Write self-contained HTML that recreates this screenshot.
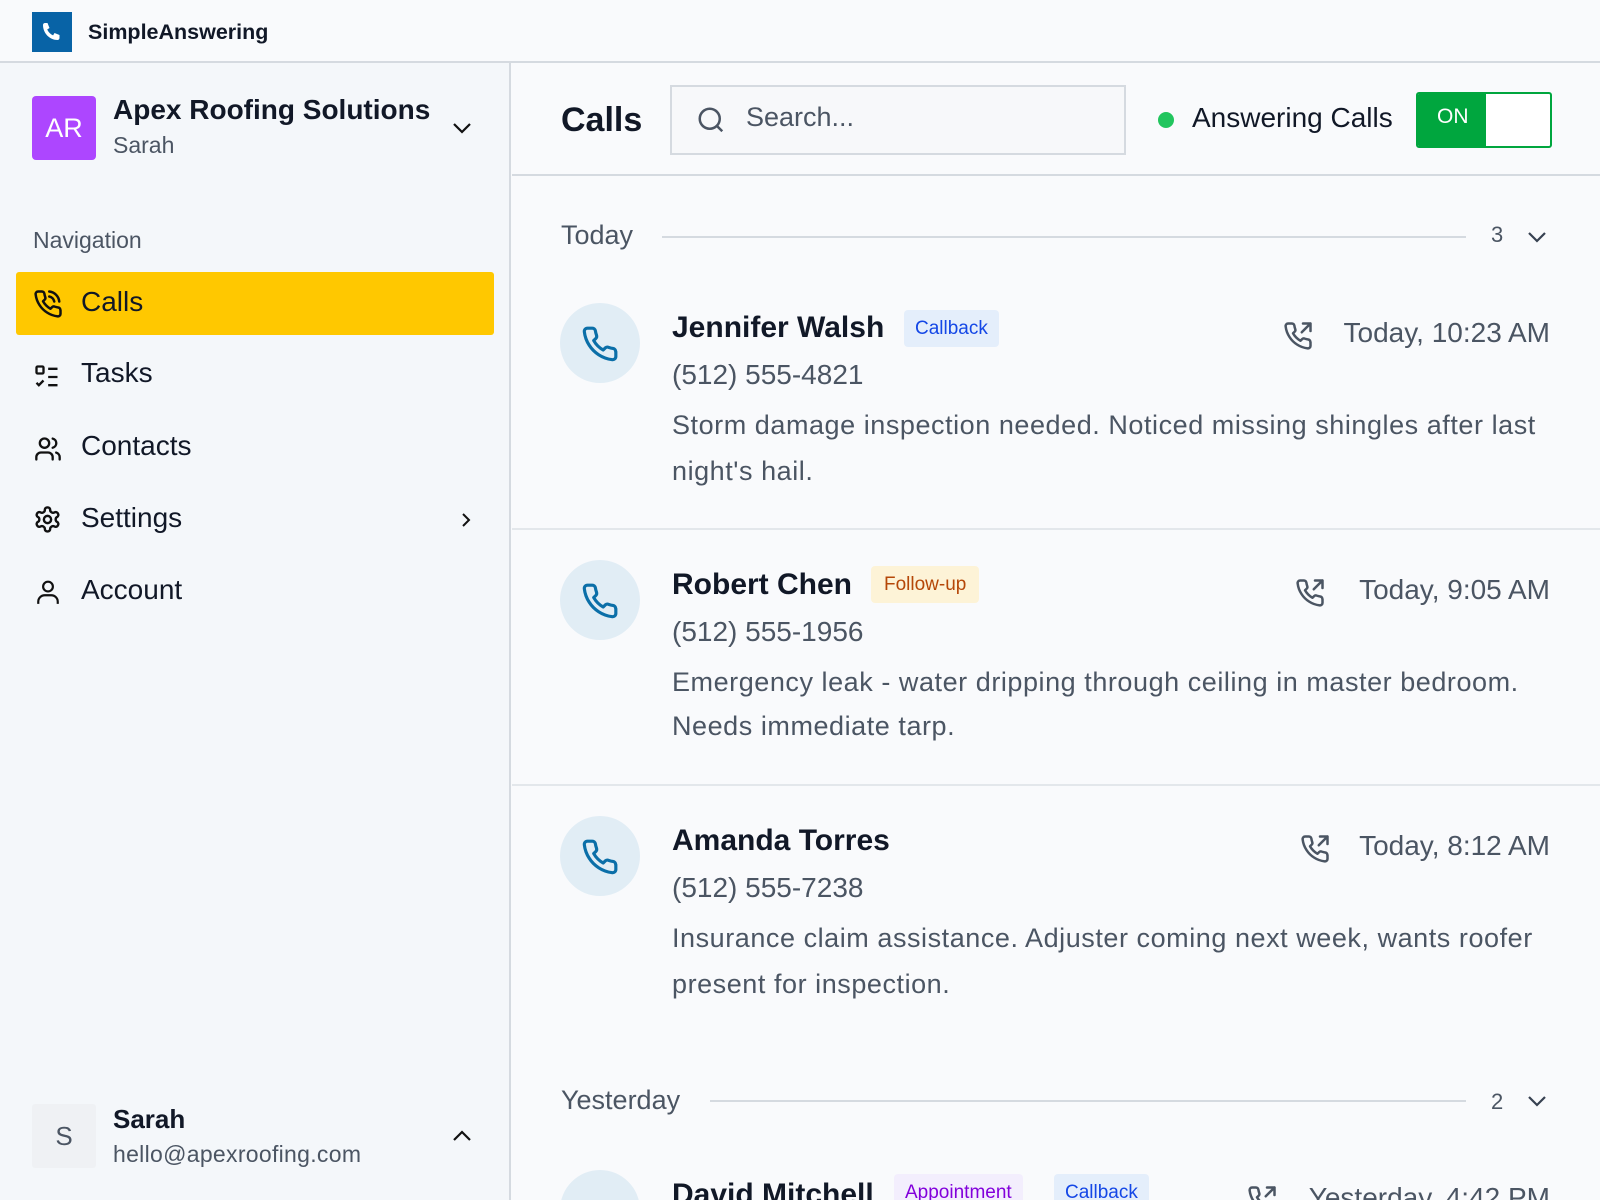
<!DOCTYPE html>
<html><head><meta charset="utf-8"><style>
*{margin:0;padding:0;box-sizing:border-box}
html,body{width:1600px;height:1200px;overflow:hidden}
body{background:#f9fafc;font-family:"Liberation Sans",sans-serif;color:#111827;position:relative}
.t{position:absolute;line-height:1;white-space:nowrap}
.a{position:absolute}
svg{position:absolute;overflow:visible}
.g{color:#4b5563}
.b{font-weight:600}
.d{letter-spacing:0.55px}
.circ{position:absolute;width:80px;height:80px;border-radius:50%;background:#e1edf5}
.badge{position:absolute;height:37px;border-radius:4px;font-size:19px;line-height:37px;padding:0 11px}
</style></head><body>
<!-- header -->
<div class="a" style="left:0;top:0;width:1600px;height:63px;background:#f9fafc;border-bottom:2px solid #d5dae0"></div>
<div class="a" style="left:32px;top:12px;width:40px;height:40px;background:#0863a6"></div>
<svg style="left:40px;top:20px" width="24" height="24" viewBox="0 0 24 24"><path d="M3 5c0-1.2 1-2 2-2h2.5l2 5-2.3 1.5c1.2 2.6 3.3 4.7 5.9 5.9L14.5 13l5 2V18c0 1.1-.8 2-2 2C10 20 3 13.5 3 5z" fill="#fff"/></svg>
<div class="t b" style="left:88px;top:22px;font-size:21.5px">SimpleAnswering</div>
<!-- sidebar -->
<div class="a" style="left:0;top:63px;width:511px;height:1137px;background:#f4f7fa;border-right:2px solid #d5dae0"></div>
<div class="a" style="left:32px;top:96px;width:64px;height:64px;background:#ad46ff;border-radius:4px;color:#fff;font-size:27px;line-height:64px;text-align:center">AR</div>
<div class="t b" style="left:113px;top:96px;font-size:28px">Apex Roofing Solutions</div>
<div class="t g" style="left:113px;top:134px;font-size:23px">Sarah</div>
<svg style="left:452px;top:122px" width="20" height="12"><path d="M2 2l8 8 8-8" fill="none" stroke="#111" stroke-width="2.2"/></svg>
<div class="t g" style="left:33px;top:229px;font-size:23px">Navigation</div>
<div class="a" style="left:16px;top:272px;width:478px;height:63px;background:#ffc800;border-radius:3px"></div>
<svg style="left:33px;top:289px" width="30" height="30" viewBox="0 0 24 24" fill="none" stroke="#111" stroke-width="2" stroke-linecap="round" stroke-linejoin="round"><path d="M13 2a9 9 0 0 1 8 8M13 6a5 5 0 0 1 4 4"/><path d="M22 16.9v3a2 2 0 0 1-2.2 2 19.8 19.8 0 0 1-8.6-3.1 19.5 19.5 0 0 1-6-6A19.8 19.8 0 0 1 2.1 4.2 2 2 0 0 1 4.1 2h3a2 2 0 0 1 2 1.7c.1 1 .4 1.9.7 2.8a2 2 0 0 1-.5 2.1L8 9.8a16 16 0 0 0 6 6l1.3-1.3a2 2 0 0 1 2.1-.4c.9.3 1.8.6 2.8.7a2 2 0 0 1 1.7 2z"/></svg>
<div class="t" style="left:81px;top:288px;font-size:28px">Calls</div>
<svg style="left:33px;top:363px" width="28" height="28" viewBox="0 0 24 24" fill="none" stroke="#111" stroke-width="2"><rect x="3" y="3" width="6" height="6" rx="1"/><path d="M3 17l2 2 4-4M13 5h8M13 12h8M13 19h8"/></svg>
<div class="t" style="left:81px;top:359px;font-size:28px">Tasks</div>
<svg style="left:33px;top:435px" width="30" height="28" viewBox="0 0 24 24" fill="none" stroke="#111" stroke-width="2" stroke-linecap="round"><path d="M16 21v-2a4 4 0 0 0-4-4H6a4 4 0 0 0-4 4v2"/><circle cx="9" cy="7" r="4"/><path d="M22 21v-2a4 4 0 0 0-3-3.9M16 3.1a4 4 0 0 1 0 7.8"/></svg>
<div class="t" style="left:81px;top:432px;font-size:28px">Contacts</div>
<svg style="left:33px;top:505px" width="29" height="29" viewBox="0 0 24 24" fill="none" stroke="#111" stroke-width="2"><path d="M12.2 2h-.4a2 2 0 0 0-2 2v.2a2 2 0 0 1-1 1.7l-.4.3a2 2 0 0 1-2 0l-.2-.1a2 2 0 0 0-2.7.7l-.2.4a2 2 0 0 0 .7 2.7l.2.1a2 2 0 0 1 1 1.7v.5a2 2 0 0 1-1 1.7l-.2.1a2 2 0 0 0-.7 2.7l.2.4a2 2 0 0 0 2.7.7l.2-.1a2 2 0 0 1 2 0l.4.3a2 2 0 0 1 1 1.7v.2a2 2 0 0 0 2 2h.4a2 2 0 0 0 2-2v-.2a2 2 0 0 1 1-1.7l.4-.3a2 2 0 0 1 2 0l.2.1a2 2 0 0 0 2.7-.7l.2-.4a2 2 0 0 0-.7-2.7l-.2-.1a2 2 0 0 1-1-1.7v-.5a2 2 0 0 1 1-1.7l.2-.1a2 2 0 0 0 .7-2.7l-.2-.4a2 2 0 0 0-2.7-.7l-.2.1a2 2 0 0 1-2 0l-.4-.3a2 2 0 0 1-1-1.7V4a2 2 0 0 0-2-2z"/><circle cx="12" cy="12" r="3"/></svg>
<div class="t" style="left:81px;top:504px;font-size:28px">Settings</div>
<svg style="left:461px;top:512px" width="10" height="16"><path d="M2 2l6 6-6 6" fill="none" stroke="#111" stroke-width="2"/></svg>
<svg style="left:35px;top:578px" width="26" height="28" viewBox="0 0 24 24" fill="none" stroke="#111" stroke-width="2"><circle cx="12" cy="7" r="4.5"/><path d="M3 23v-2a6 6 0 0 1 6-6h6a6 6 0 0 1 6 6v2"/></svg>
<div class="t" style="left:81px;top:576px;font-size:28px">Account</div>
<div class="a" style="left:32px;top:1104px;width:64px;height:64px;background:#eff1f4;border-radius:3px;color:#4b5563;font-size:26px;line-height:64px;text-align:center">S</div>
<div class="t b" style="left:113px;top:1106px;font-size:26px">Sarah</div>
<div class="t g" style="left:113px;top:1143px;font-size:23px;letter-spacing:0.3px">hello@apexroofing.com</div>
<svg style="left:452px;top:1130px" width="20" height="12"><path d="M2 10l8-8 8 8" fill="none" stroke="#111" stroke-width="2.2"/></svg>
<!-- main header -->
<div class="a" style="left:512px;top:174px;width:1088px;height:2px;background:#d5dae0"></div>
<div class="t b" style="left:561px;top:103px;font-size:34px">Calls</div>
<div class="a" style="left:670px;top:85px;width:456px;height:70px;border:2px solid #d5dae0;background:#f7f8fa"></div>
<svg style="left:696px;top:105px" width="30" height="30" viewBox="0 0 24 24" fill="none" stroke="#4b5563" stroke-width="2"><circle cx="11" cy="11" r="8"/><path d="M21 21l-4.3-4.3"/></svg>
<div class="t g" style="left:746px;top:104px;font-size:27px">Search...</div>
<div class="a" style="left:1158px;top:112px;width:16px;height:16px;border-radius:50%;background:#22c55e"></div>
<div class="t" style="left:1192px;top:104px;font-size:28px">Answering Calls</div>
<div class="a" style="left:1416px;top:92px;width:136px;height:56px;border:2px solid #00a63e;border-radius:3px;background:#fff;overflow:hidden"><div style="width:68px;height:100%;background:#00a63e"></div></div>
<div class="t" style="left:1437px;top:106px;font-size:21px;color:#fff">ON</div>
<!-- Today group -->
<div class="t g" style="left:561px;top:222px;font-size:27px">Today</div>
<div class="a" style="left:662px;top:236px;width:804px;height:2px;background:#d5dae0"></div>
<div class="t g" style="left:1491px;top:224px;font-size:22px">3</div>
<svg style="left:1527px;top:231px" width="20" height="12"><path d="M2 2l8 8 8-8" fill="none" stroke="#374151" stroke-width="2.2"/></svg>

<div class="circ" style="left:560px;top:303px"></div>
<svg style="left:581px;top:325px" width="38" height="38" viewBox="0 0 24 24" fill="none" stroke="#0b6fa8" stroke-width="2" stroke-linejoin="round"><path d="M22 16.9v3a2 2 0 0 1-2.2 2 19.8 19.8 0 0 1-8.6-3.1 19.5 19.5 0 0 1-6-6A19.8 19.8 0 0 1 2.1 4.2 2 2 0 0 1 4.1 2h3a2 2 0 0 1 2 1.7c.1 1 .4 1.9.7 2.8a2 2 0 0 1-.5 2.1L8 9.8a16 16 0 0 0 6 6l1.3-1.3a2 2 0 0 1 2.1-.4c.9.3 1.8.6 2.8.7a2 2 0 0 1 1.7 2z"/></svg>
<div class="t b" style="left:672px;top:313px;font-size:30px">Jennifer Walsh</div>
<div class="badge" style="left:904px;top:310px;background:#e4eefb;color:#1447e6">Callback</div>
<svg style="left:1283px;top:321px" width="30" height="30" viewBox="0 0 24 24" fill="none" stroke="#4b5563" stroke-width="2" stroke-linecap="round" stroke-linejoin="round"><path d="M16 2h6v6M15 9l7-7"/><path d="M22 16.9v3a2 2 0 0 1-2.2 2 19.8 19.8 0 0 1-8.6-3.1 19.5 19.5 0 0 1-6-6A19.8 19.8 0 0 1 2.1 4.2 2 2 0 0 1 4.1 2h3a2 2 0 0 1 2 1.7c.1 1 .4 1.9.7 2.8a2 2 0 0 1-.5 2.1L8 9.8a16 16 0 0 0 6 6l1.3-1.3a2 2 0 0 1 2.1-.4c.9.3 1.8.6 2.8.7a2 2 0 0 1 1.7 2z"/></svg>
<div class="t g" style="right:50px;top:319px;font-size:28px">Today, 10:23 AM</div>
<div class="t g" style="left:672px;top:361px;font-size:28px">(512) 555-4821</div>
<div class="t g d" style="left:672px;top:412px;font-size:27px">Storm damage inspection needed. Noticed missing shingles after last</div>
<div class="t g d" style="left:672px;top:458px;font-size:27px">night's hail.</div>
<div class="a" style="left:512px;top:528px;width:1088px;height:2px;background:#e3e7eb"></div>

<div class="circ" style="left:560px;top:560px"></div>
<svg style="left:581px;top:582px" width="38" height="38" viewBox="0 0 24 24" fill="none" stroke="#0b6fa8" stroke-width="2" stroke-linejoin="round"><path d="M22 16.9v3a2 2 0 0 1-2.2 2 19.8 19.8 0 0 1-8.6-3.1 19.5 19.5 0 0 1-6-6A19.8 19.8 0 0 1 2.1 4.2 2 2 0 0 1 4.1 2h3a2 2 0 0 1 2 1.7c.1 1 .4 1.9.7 2.8a2 2 0 0 1-.5 2.1L8 9.8a16 16 0 0 0 6 6l1.3-1.3a2 2 0 0 1 2.1-.4c.9.3 1.8.6 2.8.7a2 2 0 0 1 1.7 2z"/></svg>
<div class="t b" style="left:672px;top:570px;font-size:30px">Robert Chen</div>
<div class="badge" style="left:871px;top:566px;background:#fdf3d7;color:#b54708;padding:0 13px">Follow-up</div>
<svg style="left:1295px;top:578px" width="30" height="30" viewBox="0 0 24 24" fill="none" stroke="#4b5563" stroke-width="2" stroke-linecap="round" stroke-linejoin="round"><path d="M16 2h6v6M15 9l7-7"/><path d="M22 16.9v3a2 2 0 0 1-2.2 2 19.8 19.8 0 0 1-8.6-3.1 19.5 19.5 0 0 1-6-6A19.8 19.8 0 0 1 2.1 4.2 2 2 0 0 1 4.1 2h3a2 2 0 0 1 2 1.7c.1 1 .4 1.9.7 2.8a2 2 0 0 1-.5 2.1L8 9.8a16 16 0 0 0 6 6l1.3-1.3a2 2 0 0 1 2.1-.4c.9.3 1.8.6 2.8.7a2 2 0 0 1 1.7 2z"/></svg>
<div class="t g" style="right:50px;top:576px;font-size:28px">Today, 9:05 AM</div>
<div class="t g" style="left:672px;top:618px;font-size:28px">(512) 555-1956</div>
<div class="t g d" style="left:672px;top:669px;font-size:27px">Emergency leak - water dripping through ceiling in master bedroom.</div>
<div class="t g d" style="left:672px;top:713px;font-size:27px">Needs immediate tarp.</div>
<div class="a" style="left:512px;top:784px;width:1088px;height:2px;background:#e3e7eb"></div>

<div class="circ" style="left:560px;top:816px"></div>
<svg style="left:581px;top:838px" width="38" height="38" viewBox="0 0 24 24" fill="none" stroke="#0b6fa8" stroke-width="2" stroke-linejoin="round"><path d="M22 16.9v3a2 2 0 0 1-2.2 2 19.8 19.8 0 0 1-8.6-3.1 19.5 19.5 0 0 1-6-6A19.8 19.8 0 0 1 2.1 4.2 2 2 0 0 1 4.1 2h3a2 2 0 0 1 2 1.7c.1 1 .4 1.9.7 2.8a2 2 0 0 1-.5 2.1L8 9.8a16 16 0 0 0 6 6l1.3-1.3a2 2 0 0 1 2.1-.4c.9.3 1.8.6 2.8.7a2 2 0 0 1 1.7 2z"/></svg>
<div class="t b" style="left:672px;top:826px;font-size:30px">Amanda Torres</div>
<svg style="left:1300px;top:834px" width="30" height="30" viewBox="0 0 24 24" fill="none" stroke="#4b5563" stroke-width="2" stroke-linecap="round" stroke-linejoin="round"><path d="M16 2h6v6M15 9l7-7"/><path d="M22 16.9v3a2 2 0 0 1-2.2 2 19.8 19.8 0 0 1-8.6-3.1 19.5 19.5 0 0 1-6-6A19.8 19.8 0 0 1 2.1 4.2 2 2 0 0 1 4.1 2h3a2 2 0 0 1 2 1.7c.1 1 .4 1.9.7 2.8a2 2 0 0 1-.5 2.1L8 9.8a16 16 0 0 0 6 6l1.3-1.3a2 2 0 0 1 2.1-.4c.9.3 1.8.6 2.8.7a2 2 0 0 1 1.7 2z"/></svg>
<div class="t g" style="right:50px;top:832px;font-size:28px">Today, 8:12 AM</div>
<div class="t g" style="left:672px;top:874px;font-size:28px">(512) 555-7238</div>
<div class="t g d" style="left:672px;top:925px;font-size:27px">Insurance claim assistance. Adjuster coming next week, wants roofer</div>
<div class="t g d" style="left:672px;top:971px;font-size:27px">present for inspection.</div>

<!-- Yesterday -->
<div class="t g" style="left:561px;top:1087px;font-size:27px">Yesterday</div>
<div class="a" style="left:710px;top:1100px;width:756px;height:2px;background:#d5dae0"></div>
<div class="t g" style="left:1491px;top:1091px;font-size:22px">2</div>
<svg style="left:1527px;top:1095px" width="20" height="12"><path d="M2 2l8 8 8-8" fill="none" stroke="#374151" stroke-width="2.2"/></svg>
<div class="circ" style="left:560px;top:1170px"></div>
<div class="t b" style="left:672px;top:1180px;font-size:30px">David Mitchell</div>
<div class="badge" style="left:894px;top:1174px;background:#f3eefd;color:#8200db">Appointment</div>
<div class="badge" style="left:1054px;top:1174px;background:#e4eefb;color:#1447e6">Callback</div>
<svg style="left:1247px;top:1185px" width="30" height="30" viewBox="0 0 24 24" fill="none" stroke="#4b5563" stroke-width="2" stroke-linecap="round" stroke-linejoin="round"><path d="M16 2h6v6M15 9l7-7"/><path d="M22 16.9v3a2 2 0 0 1-2.2 2 19.8 19.8 0 0 1-8.6-3.1 19.5 19.5 0 0 1-6-6A19.8 19.8 0 0 1 2.1 4.2 2 2 0 0 1 4.1 2h3a2 2 0 0 1 2 1.7c.1 1 .4 1.9.7 2.8a2 2 0 0 1-.5 2.1L8 9.8a16 16 0 0 0 6 6l1.3-1.3a2 2 0 0 1 2.1-.4c.9.3 1.8.6 2.8.7a2 2 0 0 1 1.7 2z"/></svg>
<div class="t g" style="right:50px;top:1184px;font-size:28px">Yesterday, 4:42 PM</div>
</body></html>
